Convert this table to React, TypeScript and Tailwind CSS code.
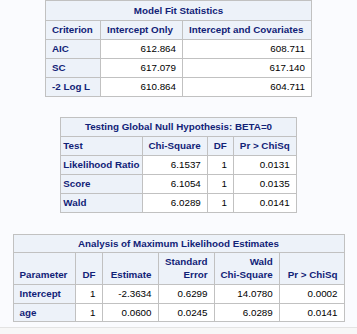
import React from 'react';

const head = 'bg-[#edf2f9] text-[#112277] font-bold border-r border-b border-[#c1c1c1] px-[6px] py-0 whitespace-nowrap';
const cell = 'bg-white text-black border-r border-b border-[#c1c1c1] px-[6px] py-0 whitespace-nowrap text-right';

const ModelFit: React.FC = () => {
  const rows = [
    ['AIC', '612.864', '608.711'],
    ['SC', '617.079', '617.140'],
    ['-2 Log L', '610.864', '604.711'],
  ];
  return (
    <table className="mx-auto border-separate border-spacing-0 border-l border-t border-[#c1c1c1] w-[267px] translate-x-[0px]">
      <thead>
        <tr className="h-[20px]">
          <th colSpan={3} className={`${head} text-center`}>Model Fit Statistics</th>
        </tr>
        <tr className="h-[19px]">
          <th className={`${head} text-left w-[55px]`}>Criterion</th>
          <th className={`${head} text-left w-[82px]`}>Intercept Only</th>
          <th className={`${head} text-left`}>Intercept and Covariates</th>
        </tr>
      </thead>
      <tbody>
        {rows.map((r) => (
          <tr key={r[0]} className="h-[19px]">
            <th className={`${head} text-left`}>{r[0]}</th>
            <td className={cell}>{r[1]}</td>
            <td className={cell}>{r[2]}</td>
          </tr>
        ))}
      </tbody>
    </table>
  );
};

const GlobalNull: React.FC = () => {
  const rows = [
    ['Likelihood Ratio', '6.1537', '1', '0.0131'],
    ['Score', '6.1054', '1', '0.0135'],
    ['Wald', '6.0289', '1', '0.0141'],
  ];
  return (
    <table className="mx-auto border-separate border-spacing-0 border-l border-t border-[#c1c1c1] w-[234px]">
      <thead>
        <tr className="h-[19px]">
          <th colSpan={4} className={`${head} text-center`}>Testing Global Null Hypothesis: BETA=0</th>
        </tr>
        <tr className="h-[19px]">
          <th className={`${head} text-left w-[88px] !px-[2px]`}>Test</th>
          <th className={`${head} text-right w-[67px]`}>Chi-Square</th>
          <th className={`${head} text-right w-[27px]`}>DF</th>
          <th className={`${head} text-right`}>Pr &gt; ChiSq</th>
        </tr>
      </thead>
      <tbody>
        {rows.map((r) => (
          <tr key={r[0]} className="h-[19px]">
            <th className={`${head} text-left !px-[2px]`}>{r[0]}</th>
            <td className={cell}>{r[1]}</td>
            <td className={cell}>{r[2]}</td>
            <td className={cell}>{r[3]}</td>
          </tr>
        ))}
      </tbody>
    </table>
  );
};

const MaxLik: React.FC = () => {
  const rows = [
    ['Intercept', '1', '-2.3634', '0.6299', '14.0780', '0.0002'],
    ['age', '1', '0.0600', '0.0245', '6.0289', '0.0141'],
  ];
  return (
    <table className="mx-auto border-separate border-spacing-0 border-l border-t border-[#c1c1c1] w-[332px]">
      <thead>
        <tr className="h-[18px]">
          <th colSpan={6} className={`${head} text-center`}>Analysis of Maximum Likelihood Estimates</th>
        </tr>
        <tr className="h-[32px]">
          <th className={`${head} text-left align-bottom pb-[3px] w-[62px]`}>Parameter</th>
          <th className={`${head} text-right align-bottom pb-[3px] w-[27px]`}>DF</th>
          <th className={`${head} text-right align-bottom pb-[3px] w-[56px]`}>Estimate</th>
          <th className={`${head} text-right align-bottom pb-[3px] w-[56px] leading-[13px]`}>
            Standard
            <br />
            Error
          </th>
          <th className={`${head} text-right align-bottom pb-[3px] w-[62px] leading-[13px]`}>
            Wald
            <br />
            Chi-Square
          </th>
          <th className={`${head} text-right align-bottom pb-[3px]`}>Pr &gt; ChiSq</th>
        </tr>
      </thead>
      <tbody>
        {rows.map((r, i) => (
          <tr key={r[0]} className={i === 0 ? 'h-[19px]' : 'h-[18px]'}>
            <th className={`${head} text-left`}>{r[0]}</th>
            {r.slice(1).map((v, j) => (
              <td key={j} className={cell}>{v}</td>
            ))}
          </tr>
        ))}
      </tbody>
    </table>
  );
};

export default function App() {
  return (
    <div className="w-[357px] h-[334px] bg-[#fafbfe] overflow-hidden flex flex-col text-[9.8px] leading-[12px] [font-family:'Liberation_Sans',Arial,sans-serif]">
      <div className="pt-0">
        <ModelFit />
      </div>
      <div className="mt-[20px]">
        <GlobalNull />
      </div>
      <div className="mt-[21px]">
        <MaxLik />
      </div>
      <div className="mt-[5px] flex-1 border-t border-[#e3e3e3] bg-[#f7f7f7]" />
    </div>
  );
}
